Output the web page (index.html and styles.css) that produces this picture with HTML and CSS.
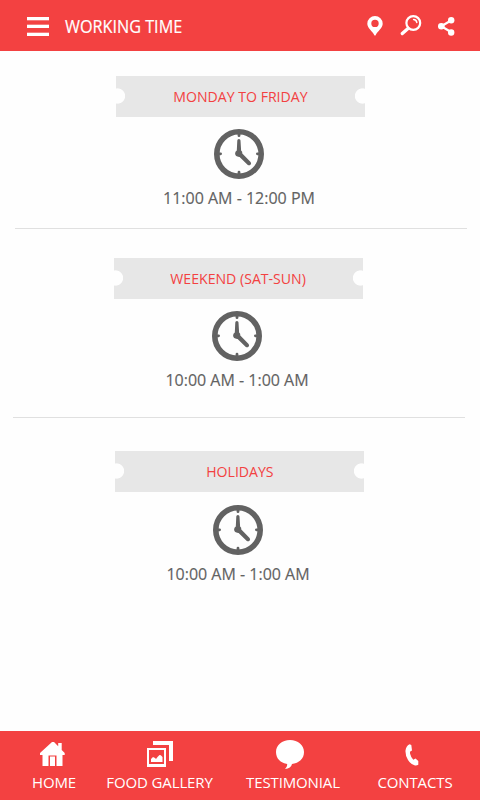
FILE: index.html
```html
<!DOCTYPE html>
<html lang="en">
<head>
<meta charset="utf-8">
<title>Working Time</title>
<link rel="stylesheet" href="styles.css">
</head>
<body>
<svg class="defs" width="0" height="0">
  <symbol id="clock" viewBox="0 0 50 50">
    <circle cx="25" cy="25" r="22.200" fill="none" stroke="#626262" stroke-width="5.600"/>
    <path d="M25 4v2.700M25 43.200v3M4 24.800h2.600M43.400 24.800h3" stroke="#626262" stroke-width="2.800" stroke-linecap="round"/>
    <path d="M23.300 11.600q0-1.500 1.600-1.500t1.600 1.500l.6 9.900q1.500 1.100 1.200 3l8.300 8.500q1.100 1.500-.1 2.700t-2.700.2l-8.200-8q-4.300.2-4.500-3.300 0-1.900 1.700-3z" fill="#626262"/>
  </symbol>
</svg>
<header class="topbar">
  <svg class="menu" width="22" height="19" viewBox="0 0 22 19"><path d="M0 0h22v3H0zM0 8h22v3H0zM0 16h22v3H0z" fill="#fff"/><path d="M0 3h22v1H0zM0 7h22v1H0zM0 15h22v1H0z" fill="#fff" opacity=".3"/></svg>
  <h1 class="title"><span>WORKING TIME</span></h1>
  <svg class="pin" width="16" height="20" viewBox="0 0 16 20"><path fill="#fff" fill-rule="evenodd" d="M8 0a7.700 7.700 0 0 1 7.700 7.700c0 4.300-5 7.300-7.200 11.700h-1C5.300 15 .3 12 .3 7.700A7.700 7.700 0 0 1 8 0zm0 3.700a3.700 3.700 0 1 0 0 7.400 3.700 3.700 0 0 0 0-7.400z"/></svg>
  <svg class="search" width="22" height="21" viewBox="0 0 22 21" fill="none" stroke="#fff" stroke-linecap="round"><circle cx="13.300" cy="8" r="6.900" stroke-width="2.200"/><path d="M8 13.500 2.300 18.600" stroke-width="3.300"/><path d="M13.600 4.600q2.800.2 3.200 2.900" stroke-width="1.500"/></svg>
  <svg class="share" width="17" height="19" viewBox="0 0 17 19" fill="#fff"><path d="M13.400 3.300 3.300 9.300l10.100 6" fill="none" stroke="#fff" stroke-width="2.200"/><circle cx="13.200" cy="3.300" r="3.200"/><circle cx="3.300" cy="9.300" r="3.300"/><circle cx="13.200" cy="15.500" r="3.200"/></svg>
</header>
<main>
  <section class="slot slot-week">
    <h2 class="ticket"><span>MONDAY TO FRIDAY</span></h2>
    <svg class="clock"><use href="#clock"/></svg>
    <p class="hours"><span>11:00 AM - 12:00 PM</span></p>
  </section>
  <section class="slot slot-weekend">
    <h2 class="ticket"><span>WEEKEND (SAT-SUN)</span></h2>
    <svg class="clock"><use href="#clock"/></svg>
    <p class="hours"><span>10:00 AM - 1:00 AM</span></p>
  </section>
  <section class="slot slot-holiday">
    <h2 class="ticket"><span>HOLIDAYS</span></h2>
    <svg class="clock"><use href="#clock"/></svg>
    <p class="hours"><span>10:00 AM - 1:00 AM</span></p>
  </section>
</main>
<nav class="tabs">
  <a class="tab home"><svg width="26" height="26" viewBox="0 0 26 26"><path fill="#fff" d="M12 1 0 12v2h2.500v11h6V14.500h8V25h6V14h2.200v-2l-3-2.900V2h-3.500v3.200L14 1z"/><path fill="#fff" d="M10 15.500h5V25h-5z"/></svg><span>HOME</span></a>
  <a class="tab gallery"><svg width="26" height="26" viewBox="0 0 26 26"><path fill="#fff" d="M6 0h20v20h-4V4H6z"/><path fill="#fff" fill-rule="evenodd" d="M0 7h19v19H0zm2 2v14h15V9z"/><path fill="#fff" d="M4 21v-3l2-2 2 1 1 1 1.500-2 2-2 1.300.3L15.500 16v5z"/></svg><span>FOOD GALLERY</span></a>
  <a class="tab testimonial"><svg width="28" height="30" viewBox="0 0 28 30"><path fill="#fff" d="M14 0c8 0 14 5 14 12s-5 11-12 12c-.6 2.700-3 4.700-7 5 1.500-1.500 2.200-3 2.200-5C4.500 23 0 18.500 0 12 0 5 6 0 14 0z"/></svg><span>TESTIMONIAL</span></a>
  <a class="tab contacts"><svg width="14" height="22" viewBox="0 0 14 22"><path fill="#fff" d="M4.500.3Q1 2 .5 6.500q-.3 5 2.500 9.500 3 4.700 7 5.500 1.700.3 3.300-.7V17l-2.800-2.500-2.200 1.200Q6 13.700 5.200 10q-.4-1.500 0-2.500L7 6.500 6.300 1z"/></svg><span>CONTACTS</span></a>
</nav>
</body>
</html>
```
FILE: styles.css
```css
* { box-sizing: border-box; margin: 0; padding: 0; }
body {
  width: 480px;
  height: 800px;
  display: flex;
  flex-direction: column;
  overflow: hidden;
  background: #fefefe;
  font-family: "Open Sans", "Noto Sans", sans-serif;
  font-weight: 400;
}
svg { display: block; flex: none; }
span { display: inline-block; white-space: nowrap; }
.defs { position: absolute; }
.topbar {
  flex: none;
  height: 51px;
  padding-left: 27px;
  display: flex;
  align-items: flex-start;
  background: #f34141;
  color: #fff;
}
.menu { margin-top: 17px; }
.title { width: 302px; margin-left: 16px; padding-top: 14px; font-size: 18px; line-height: 24px; font-weight: 400; }
.title span { transform: scaleX(0.9); transform-origin: left; -webkit-text-stroke: 0.2px currentColor; }
.pin { margin-top: 16px; }
.search { margin: 15px 0 0 17px; }
.share { margin: 17px 0 0 16px; }
main { flex: 1; }
.slot { display: flex; flex-direction: column; align-items: center; }
.slot-week { margin-left: 15px; width: 452px; height: 178px; padding: 25px 1px 0 0; border-bottom: 1px solid #e0e0e0; }
.slot-weekend { margin-left: 13px; width: 452px; height: 189px; padding: 29px 1px 0 0; border-bottom: 1px solid #e0e0e0; }
.slot-holiday { margin-left: 14px; width: 451px; padding-top: 33px; }
.ticket {
  width: 249px;
  height: 41px;
  line-height: 41px;
  text-align: center;
  font-size: 15px;
  font-weight: 400;
  color: #f34141;
  background:
    radial-gradient(circle at 1.5px 20px, #fefefe 7.2px, transparent 8px),
    radial-gradient(circle at 246.500px 20px, #fefefe 7.2px, transparent 8px),
    #e7e7e7;
}
.ticket span { transform: scaleX(0.94); }
.clock { width: 50px; height: 50px; margin: 12px 3px 0 0; }
.slot-holiday .clock { margin-top: 13px; }
.hours { margin: 7px 3px 0 0; height: 24px; line-height: 24px; font-size: 16px; color: #626262; }
.hours span { -webkit-text-stroke: 0.15px currentColor; }
.tabs { flex: none; height: 69px; display: flex; background: #f34141; color: #fff; }
.tab { display: flex; flex-direction: column; align-items: center; justify-content: space-between; padding-bottom: 7px; font-size: 15px; line-height: 22px; }
.tab span { letter-spacing: -0.12px; }
.home { margin-left: 32px; width: 44px; padding-top: 10px; }
.home svg { margin-right: 3px; }
.gallery { margin-left: 30px; width: 107px; padding-top: 10px; }
.testimonial { margin-left: 33px; width: 94px; padding-top: 9px; }
.testimonial svg { margin-right: 6px; }
.contacts { margin-left: 37px; width: 76px; padding-top: 13px; }
.contacts svg { margin-right: 7px; }
```
